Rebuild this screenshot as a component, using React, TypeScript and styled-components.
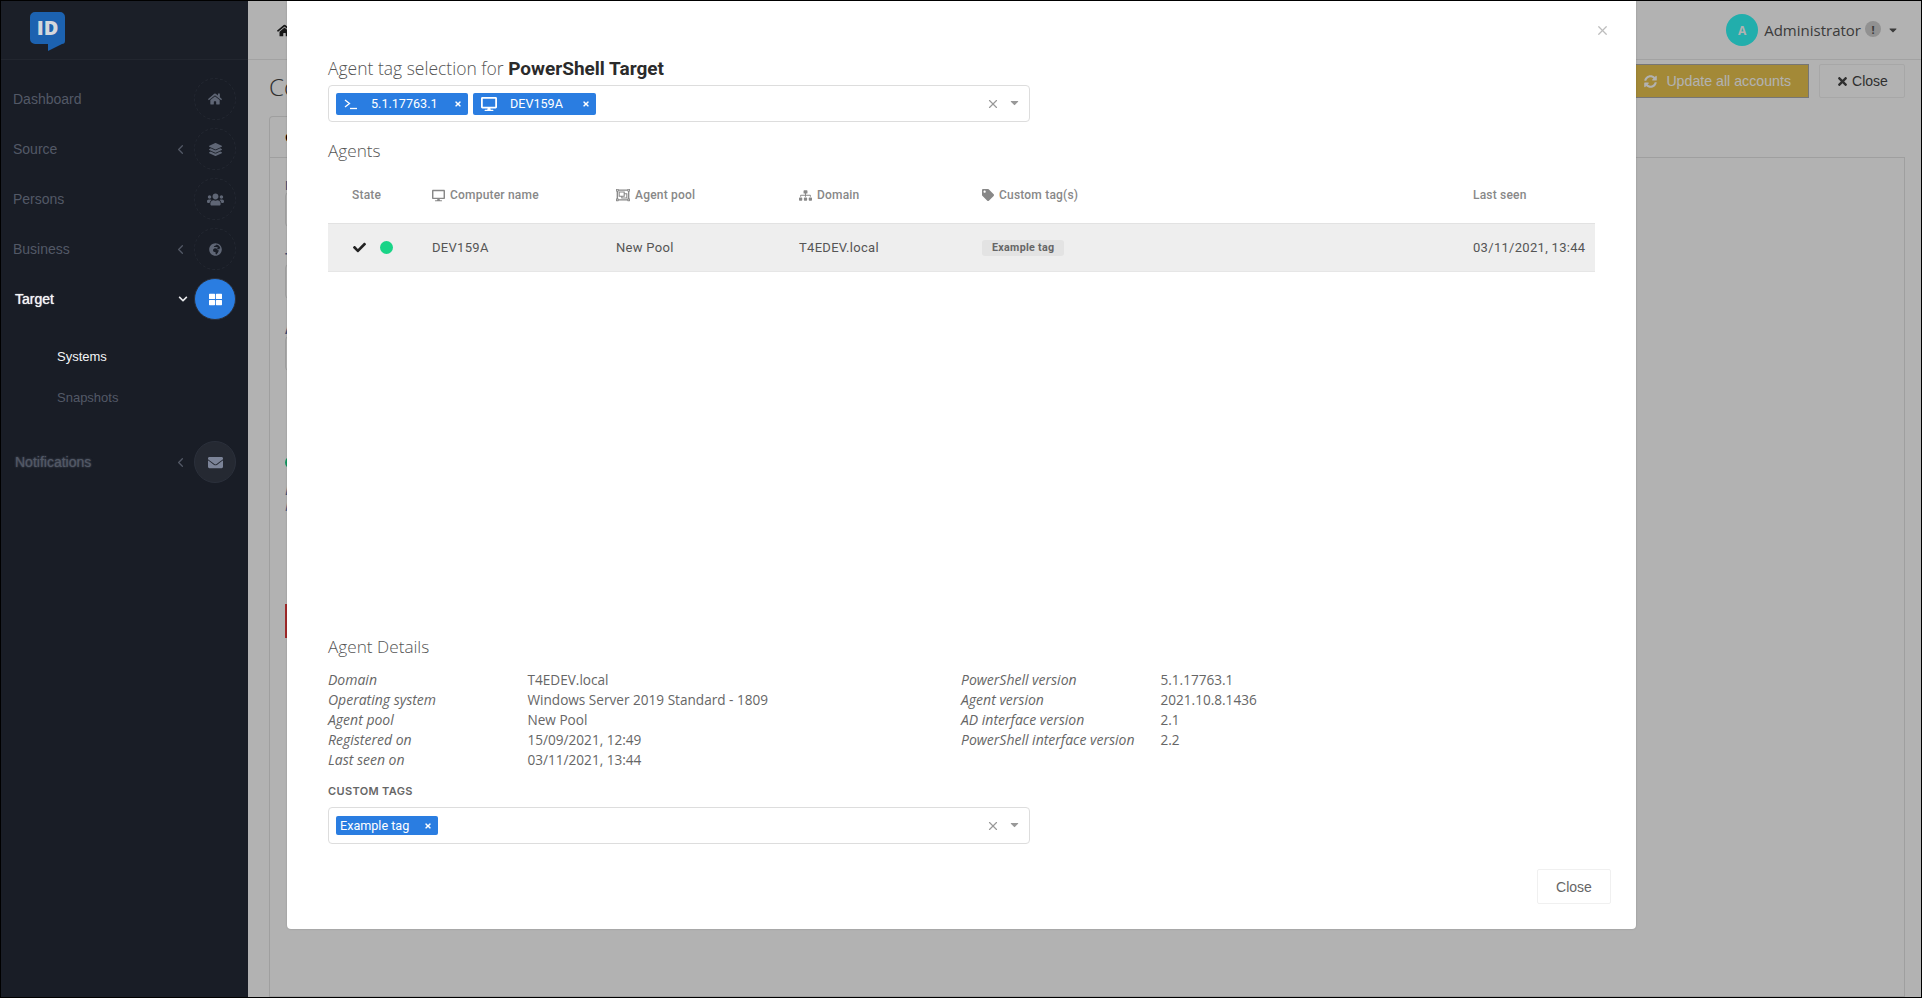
import React from "react";
import styled, { createGlobalStyle } from "styled-components";
import {
  FaHome, FaLayerGroup, FaUsers, FaGlobeAfrica, FaThLarge, FaEnvelope, FaSyncAlt, FaTimes,
  FaDesktop, FaRegObjectGroup, FaSitemap, FaTag, FaCheck, FaCaretDown, FaChevronDown,
} from "react-icons/fa";
import { LuChevronLeft, LuX } from "react-icons/lu";

const Global = createGlobalStyle`
  html, body { margin: 0; padding: 0; height: 100%; overflow: hidden; }
  body { font-family: "Liberation Sans", Arial, sans-serif; background: #000; }
  #root { height: 100%; }
  * { box-sizing: border-box; }
`;

const Frame = styled.div`
  width: 1922px; height: 998px; border: 1px solid #000; display: flex; position: relative; overflow: hidden; background: #fff;
`;
const Sidebar = styled.aside`
  width: 247px; flex: none; background: #191d26; display: flex; flex-direction: column;
`;
const LogoBar = styled.div`
  height: 59px; flex: none; padding: 11px 0 0 29px; background: #1b1f28; border-bottom: 1px solid #22262f;
`;
const NavList = styled.nav`
  padding-top: 14px; display: flex; flex-direction: column;
`;
const NavRow = styled.div`
  height: 50px; display: flex; align-items: center; padding-left: 12px;
`;
const NavLabel = styled.span<{ $active?: boolean; $halo?: boolean }>`
  flex: 1; font-size: 14px; color: ${p => (p.$active ? "#f4f5f7" : "#535966")};
  font-weight: ${p => (p.$active ? 500 : 400)};
  padding-left: ${p => (p.$active || p.$halo ? "2px" : "0")};
  text-shadow: ${p => (p.$active ? "0 0 1px #fff" : p.$halo ? "0 0 2px #5a6272" : "none")};
`;
const NavChevron = styled.span<{ $active?: boolean }>`
  width: 18px; margin-right: ${p => (p.$active ? "2px" : "5px")}; display: flex; justify-content: center;
  color: ${p => (p.$active ? "#e8e9ec" : "#535966")};
  font-size: ${p => (p.$active ? "10px" : "15px")};
`;
const NavCircle = styled.span<{ $variant?: "active" | "filled" }>`
  width: 42px; height: 42px; margin-right: 12px; border-radius: 50%; display: flex; align-items: center; justify-content: center; flex: none;
  font-size: 13px;
  color: ${p => (p.$variant === "active" ? "#fff" : p.$variant === "filled" ? "#7c8498" : "#5f6675")};
  background: ${p => (p.$variant === "active" ? "#2a7de1" : p.$variant === "filled" ? "#252932" : "transparent")};
  border: 1px ${p => (p.$variant ? "solid #2b303b" : "dashed #242832")};
`;
const SubMenu = styled.div`
  padding: 12px 0 19px 56px; display: flex; flex-direction: column;
`;
const SubItem = styled.div<{ $active?: boolean }>`
  height: 41px; display: flex; align-items: center; font-size: 13px;
  color: ${p => (p.$active ? "#f4f5f7" : "#535966")};
`;

const Main = styled.main`
  flex: 1; position: relative; background: #fff; display: flex; flex-direction: column; min-width: 0;
`;
const TopBar = styled.header`
  height: 59px; flex: none; background: #fff; border-bottom: 1px solid #e9e9e9; display: flex; align-items: center; padding: 0 22px 0 29px; color: #333;
`;
const Crumb = styled.span`
  font-size: 15px; color: #222; display: flex;
`;
const UserBox = styled.div`
  margin-left: auto; display: flex; align-items: center;
`;
const Avatar = styled.span`
  width: 32px; height: 32px; border-radius: 50%; background: #31f9f6; color: #fff; font: 700 12px "Open Sans", sans-serif;
  display: flex; align-items: center; justify-content: center; margin-right: 6px;
`;
const UserName = styled.span`
  font: 400 15px "Open Sans", sans-serif; color: #555;
`;
const Alert = styled.span`
  width: 16px; height: 16px; border-radius: 50%; background: #d0d0d0; color: #555; font: 700 11px "Open Sans", sans-serif;
  display: flex; align-items: center; justify-content: center; margin: -2px 0 0 4px;
`;
const Caret = styled.span`
  margin-left: 6px; color: #555; font-size: 12px; display: flex;
`;
const TitleBar = styled.div`
  height: 56px; flex: none; display: flex; align-items: center; padding: 0 16px 0 21px;
`;
const PageTitle = styled.h1`
  margin: 0; font: 300 24px "Open Sans", sans-serif; color: #444; padding-bottom: 4px;
`;
const Actions = styled.div`
  margin-left: auto; display: flex; gap: 10px; align-items: center; margin-bottom: 14px;
`;
const WarnButton = styled.button`
  height: 34px; width: 200px; border: 1px solid #a9a9a9; background: #eac550; color: #ffffff;
  font: 400 14.2px "Liberation Sans", sans-serif; display: flex; align-items: center; justify-content: flex-end; gap: 9px; padding: 0 17px 0 0;
`;
const PlainButton = styled.button`
  height: 34px; width: 86px; border: 1px solid #f0f0f0; background: #fff; color: #444; border-radius: 2px;
  font: 400 14px "Liberation Sans", sans-serif; display: flex; align-items: center; justify-content: center; gap: 3px;
`;
const Content = styled.section`
  flex: 1; margin: 0 16px 0 21px; min-height: 0; display: flex; flex-direction: column;
`;
const Tab = styled.div`
  height: 41px; width: 240px; flex: none; border: 1px solid #e4e4e4; border-bottom: 0; border-radius: 4px 4px 0 0; padding: 0 15px;
  display: flex; align-items: center; font: 700 13px "Open Sans", sans-serif; color: #000;
`;
const Panel = styled.div`
  flex: 1; border: 1px solid #e4e4e4; padding: 19px 15px; display: flex; flex-direction: column;
`;
const FieldLabel = styled.label`
  height: 15px; font: 700 12px "Open Sans", sans-serif; color: #5571a8; margin-bottom: 0;
`;
const FieldInput = styled.div`
  height: 35px; width: 500px; border: 1px solid #e4e4e4; margin-bottom: 22px; border-radius: 4px;
`;
const StatusDot = styled.span`
  display: block; width: 13px; height: 13px; border-radius: 50%; background: #19d487; margin-top: 63px;
`;
const Note = styled.p`
  margin: 13px 0 0; font: italic 400 13px/16px "Open Sans", sans-serif; color: #5571a8;
`;
const RedBar = styled.div`
  width: 500px; height: 34px; background: #e53a3a; margin-top: 90px;
`;

const Backdrop = styled.div`
  position: absolute; inset: 0; background: rgba(0, 0, 0, 0.3);
`;
const Modal = styled.div`
  position: absolute; top: 0; left: 39px; width: 1349px; height: 928px; background: #fff; border-radius: 0 0 4px 4px;
  padding: 54px 40px 0 41px; display: flex; flex-direction: column; box-shadow: 0 0 2px rgba(0,0,0,.2);
`;
const ModalClose = styled.span`
  position: absolute; top: 22px; right: 26px; color: #bdbdbd; font-size: 15px; display: flex;
`;
const ModalTitle = styled.h4`
  margin: 0 0 3px; height: 27px; font: 300 17.5px/27px "Open Sans", sans-serif; color: #555;
`;
const TitleStrong = styled.strong`
  font: 700 19px "Roboto", sans-serif; color: #2b2b2b;
`;
const SelectBox = styled.div`
  width: 702px; height: 37px; flex: none; border: 1px solid #ddd; border-radius: 4px; display: flex; align-items: center; gap: 5px; padding-left: 7px;
`;
const Chip = styled.span<{ $w: number; $h: number; $pl?: number }>`
  width: ${p => p.$w}px; height: ${p => p.$h}px; background: #2a7de1; border-radius: 2px; color: #fff; font: 400 12.6px "Roboto", sans-serif;
  display: flex; align-items: center; padding: 0 6px 0 ${p => p.$pl ?? 8}px; flex: none;
`;
const ChipIcon = styled.span<{ $w: number; $mr: number }>`
  width: ${p => p.$w}px; margin-right: ${p => p.$mr}px; display: flex; font-size: 16px;
`;
const ChipText = styled.span`
  flex: 1;
`;
const ChipRemove = styled.span`
  font-size: 11px; font-weight: 700; display: flex;
`;
const SelectTail = styled.div`
  margin-left: auto; display: flex; align-items: center; gap: 8px; padding-right: 8px; color: #999;
`;
const SelectClear = styled.span`
  display: flex; font-size: 14px;
`;
const SelectCaret = styled.span`
  display: flex; font-size: 13px; margin-top: -2px;
`;
const SectionTitle = styled.h5`
  margin: 0; font: 300 17.2px/24px "Open Sans", sans-serif; color: #555;
`;
const AgentsTitle = styled(SectionTitle)`
  margin-top: 17px;
`;
const AgentTable = styled.div`
  margin-top: 13px; width: 1267px; height: 459px; flex: none;
`;
const TableGrid = styled.div`
  display: grid; grid-template-columns: 104px 184px 183px 183px 491px 122px;
`;
const Head = styled(TableGrid)`
  height: 47px; padding-bottom: 9px; align-items: center;
`;
const HeadCell = styled.span<{ $pl?: number }>`
  padding-left: ${p => p.$pl ?? 0}px; font: 500 12px "Roboto", sans-serif; color: #888; letter-spacing: 0.2px; display: flex; align-items: center; gap: 5px;
`;
const HeadIcon = styled.span<{ $size?: number }>`
  display: flex; font-size: ${p => p.$size ?? 13}px;
`;
const Row = styled(TableGrid)`
  height: 49px; align-items: center; background: #eee; border-top: 1px solid #e2e2e2; border-bottom: 1px solid #e6e6e6;
`;
const Cell = styled.span`
  font: 400 13px "Roboto", sans-serif; color: #555; letter-spacing: 0.3px;
`;
const StateCell = styled.span`
  display: flex; align-items: center; padding-left: 25px; gap: 14px; color: #222; font-size: 13px;
`;
const Dot = styled.span`
  width: 13px; height: 13px; border-radius: 50%; background: #19d487;
`;
const TagBadge = styled.span`
  display: inline-block; height: 16px; padding: 0 10px; border-radius: 3px; background: #e3e3e3; color: #666; font: 700 10.7px/16px "Roboto", sans-serif;
`;
const DetailsGrid = styled.div`
  margin-top: 11px; display: grid; grid-template-columns: 633px 1fr;
`;
const DetailColumn = styled.dl`
  margin: 0; display: grid; grid-template-columns: 199.5px 1fr; grid-auto-rows: 20px;
  font: 13.6px/20px "Open Sans", sans-serif; color: #666;
`;
const Term = styled.dt`
  font-style: italic; font-weight: 400; font-size: 14px;
`;
const Def = styled.dd`
  margin: 0;
`;
const TagsLabel = styled.div`
  margin-top: 12px; height: 25px; font: 600 11px/14px "Inter", sans-serif; color: #666; letter-spacing: 0.35px; padding-top: 2px;
`;
const Footer = styled.div`
  margin-top: 25px; display: flex; justify-content: flex-end;
`;
const FooterButton = styled.button`
  width: 74px; height: 35px; margin-right: -15px; background: #fff; border: 1px solid #f0f0f0; border-radius: 2px; color: #666; font: 400 14px "Liberation Sans", sans-serif;
`;

const Logo = () => (
  <svg width="36" height="40" viewBox="0 0 36 40">
    <path d="M5 0H30a5 5 0 0 1 5 5V29a3 3 0 0 1-3 3L18 39V32H5a5 5 0 0 1-5-5V5a5 5 0 0 1 5-5Z" fill="#1c62b0" />
    <text x="17.5" y="23" textAnchor="middle" fontFamily="Open Sans" fontWeight="800" fontSize="20" fill="#d4d8dc">ID</text>
  </svg>
);

const TerminalIcon = () => (
  <svg width="14" height="12" viewBox="0 0 14 12" fill="none" stroke="#fff" strokeWidth="1.3">
    <path d="M1 2l4.5 3.5L1 9" />
    <path d="M6 10.5h7" />
  </svg>
);

const details1 = [
  ["Domain", "T4EDEV.local"],
  ["Operating system", "Windows Server 2019 Standard - 1809"],
  ["Agent pool", "New Pool"],
  ["Registered on", "15/09/2021, 12:49"],
  ["Last seen on", "03/11/2021, 13:44"],
];
const details2 = [
  ["PowerShell version", "5.1.17763.1"],
  ["Agent version", "2021.10.8.1436"],
  ["AD interface version", "2.1"],
  ["PowerShell interface version", "2.2"],
];

const nav = [
  { label: "Dashboard", icon: <FaHome size={14} /> },
  { label: "Source", icon: <FaLayerGroup />, chev: true },
  { label: "Persons", icon: <FaUsers size={17} /> },
  { label: "Business", icon: <FaGlobeAfrica />, chev: true },
];

const SelectEnd = () => (
  <SelectTail>
    <SelectClear><LuX /></SelectClear>
    <SelectCaret><FaCaretDown /></SelectCaret>
  </SelectTail>
);

export default function App() {
  return (
    <>
      <Global />
      <Frame>
        <Sidebar>
          <LogoBar><Logo /></LogoBar>
          <NavList>
            {nav.map(n => (
              <NavRow key={n.label}>
                <NavLabel>{n.label}</NavLabel>
                {n.chev && <NavChevron><LuChevronLeft /></NavChevron>}
                <NavCircle>{n.icon}</NavCircle>
              </NavRow>
            ))}
            <NavRow>
              <NavLabel $active>Target</NavLabel>
              <NavChevron $active><FaChevronDown /></NavChevron>
              <NavCircle $variant="active"><FaThLarge /></NavCircle>
            </NavRow>
            <SubMenu>
              <SubItem $active>Systems</SubItem>
              <SubItem>Snapshots</SubItem>
            </SubMenu>
            <NavRow>
              <NavLabel $halo>Notifications</NavLabel>
              <NavChevron><LuChevronLeft /></NavChevron>
              <NavCircle $variant="filled"><FaEnvelope size={15} /></NavCircle>
            </NavRow>
          </NavList>
        </Sidebar>
        <Main>
          <TopBar>
            <Crumb><FaHome /></Crumb>
            <UserBox>
              <Avatar>A</Avatar>
              <UserName>Administrator</UserName>
              <Alert>!</Alert>
              <Caret><FaCaretDown /></Caret>
            </UserBox>
          </TopBar>
          <TitleBar>
            <PageTitle>Con</PageTitle>
            <Actions>
              <WarnButton><FaSyncAlt size={13} /> Update all accounts</WarnButton>
              <PlainButton><FaTimes size={13} /> Close</PlainButton>
            </Actions>
          </TitleBar>
          <Content>
            <Tab>General</Tab>
            <Panel>
              <FieldLabel>Name</FieldLabel>
              <FieldInput />
              <FieldLabel>Type</FieldLabel>
              <FieldInput />
              <FieldLabel>Agent</FieldLabel>
              <FieldInput />
              <StatusDot />
              <Note>Last run<br />Information</Note>
              <RedBar />
            </Panel>
          </Content>
          <Backdrop />
          <Modal>
            <ModalClose><LuX /></ModalClose>
            <ModalTitle>Agent tag selection for <TitleStrong>PowerShell Target</TitleStrong></ModalTitle>
            <SelectBox>
              <Chip $w={132} $h={22}>
                <ChipIcon $w={14} $mr={13}><TerminalIcon /></ChipIcon>
                <ChipText>5.1.17763.1</ChipText>
                <ChipRemove><FaTimes size={8} /></ChipRemove>
              </Chip>
              <Chip $w={123} $h={22}>
                <ChipIcon $w={16} $mr={13}><FaDesktop /></ChipIcon>
                <ChipText>DEV159A</ChipText>
                <ChipRemove><FaTimes size={8} /></ChipRemove>
              </Chip>
              <SelectEnd />
            </SelectBox>
            <AgentsTitle>Agents</AgentsTitle>
            <AgentTable>
              <Head>
                <HeadCell $pl={24}>State</HeadCell>
                <HeadCell><HeadIcon><FaDesktop /></HeadIcon>Computer name</HeadCell>
                <HeadCell><HeadIcon $size={14}><FaRegObjectGroup /></HeadIcon>Agent pool</HeadCell>
                <HeadCell><HeadIcon><FaSitemap /></HeadIcon>Domain</HeadCell>
                <HeadCell><HeadIcon $size={12}><FaTag /></HeadIcon>Custom tag(s)</HeadCell>
                <HeadCell>Last seen</HeadCell>
              </Head>
              <Row>
                <StateCell><FaCheck /><Dot /></StateCell>
                <Cell>DEV159A</Cell>
                <Cell>New Pool</Cell>
                <Cell>T4EDEV.local</Cell>
                <Cell><TagBadge>Example tag</TagBadge></Cell>
                <Cell>03/11/2021, 13:44</Cell>
              </Row>
            </AgentTable>
            <SectionTitle>Agent Details</SectionTitle>
            <DetailsGrid>
              <DetailColumn>
                {details1.map(([k, v]) => (
                  <React.Fragment key={k}><Term>{k}</Term><Def>{v}</Def></React.Fragment>
                ))}
              </DetailColumn>
              <DetailColumn>
                {details2.map(([k, v]) => (
                  <React.Fragment key={k}><Term>{k}</Term><Def>{v}</Def></React.Fragment>
                ))}
              </DetailColumn>
            </DetailsGrid>
            <TagsLabel>CUSTOM TAGS</TagsLabel>
            <SelectBox>
              <Chip $w={102} $h={19} $pl={4}>
                <ChipText>Example tag</ChipText>
                <ChipRemove><FaTimes size={8} /></ChipRemove>
              </Chip>
              <SelectEnd />
            </SelectBox>
            <Footer><FooterButton>Close</FooterButton></Footer>
          </Modal>
        </Main>
      </Frame>
    </>
  );
}
